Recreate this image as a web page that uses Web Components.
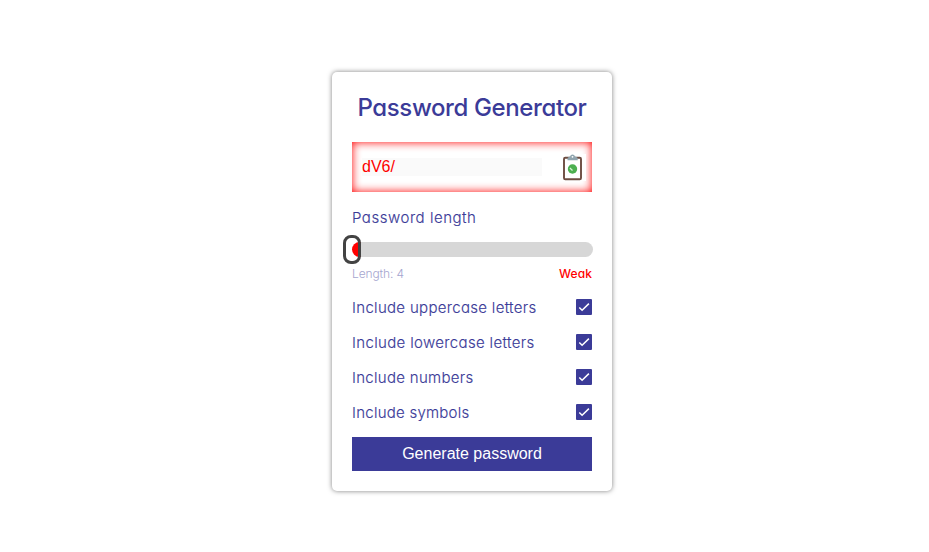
<!DOCTYPE html>
<html lang="en">
<head>
<meta charset="utf-8">
<title>Password Generator</title>
<style>
body{margin:0;background:#fff;font-family:Inter,"Open Sans",sans-serif;color:#3b3b98}
</style>
</head>
<body>
<password-generator></password-generator>
<script>
const define=(name,html,setup)=>customElements.define(name,class extends HTMLElement{
  constructor(){super();this.attachShadow({mode:'open'}).innerHTML=html;}
  connectedCallback(){if(setup)setup(this);}
});

// Text whose letter spacing is adjusted to fill the width given in its attribute.
define('fit-text',`<style>
:host{display:block;white-space:nowrap;font-feature-settings:"cv11" 1,"calt" 0}
span{display:inline-block}
</style><span><slot></slot></span>`,el=>{
  const span=el.shadowRoot.querySelector('span');
  const natural=span.getBoundingClientRect().width;
  const n=el.textContent.length;
  span.style.letterSpacing=((+el.getAttribute('width')-natural)/n)+'px';
});

define('clipboard-icon',`<style>:host{display:block;width:27px;height:27px;background:#fff}svg{display:block}</style>
<svg width="27" height="27" viewBox="0 0 27 27">
<rect x="5" y="3.700" width="17" height="21.500" rx="1.300" fill="#fff" stroke="#6d4c41" stroke-width="1.900"/>
<path d="M8.500 6.300V4.700Q8.500 3.300 10 3.100L11 2.500A2.600 2.600 0 0 1 16 2.500L17.200 3.100Q18.700 3.300 18.700 4.700V6.300z" fill="#90a4ae"/>
<circle cx="13.500" cy="2.800" r=".9" fill="#fff"/>
<circle cx="13.500" cy="15" r="4.700" fill="#4caf50"/>
<path d="M10.900 14.100l2.600 2.300" stroke="#d6f5d7" stroke-width="1.300"/>
</svg>`);

define('password-display',`<style>
:host{display:flex;box-sizing:border-box;height:50px;padding:0 6px 0 10px;align-items:center;justify-content:space-between;box-shadow:inset 0 0 10px #f00}
.value{width:180px;height:18px;font:16px/18px "Liberation Sans",sans-serif;color:#f00;background:#fafafa}
</style><div class="value"><slot></slot></div><clipboard-icon></clipboard-icon>`);

define('length-slider',`<style>
:host{display:block;position:relative;width:241px;height:15px;border-radius:8px;background:linear-gradient(90deg,#f00 9px,#d7d7d7 9px)}
.thumb{position:absolute;box-sizing:border-box;left:-9px;top:-7px;width:18px;height:29px;border:3px solid #434343;border-radius:8px}
</style><div class="thumb"></div>`);

define('check-option',`<style>
:host{display:flex;height:20px;align-items:center;justify-content:space-between;font-size:15px;font-weight:300;-webkit-text-stroke:.15px #3b3b98}
svg{display:block}
</style><slot></slot><svg width="16" height="16" viewBox="0 0 16 16"><rect width="16" height="16" rx="1" fill="#3b3b98"/><path d="M3.300 8.500l2.800 2.700L12.900 4.600" fill="none" stroke="#fff" stroke-width="1.500"/></svg>`);

define('action-button',`<style>
:host{display:block}
button{display:block;width:100%;height:34px;padding:0;border:0;background:#3b3b98;color:#fff;font:16px "Liberation Sans",sans-serif}
</style><button><slot></slot></button>`);

define('password-generator',`<style>
:host{display:flex;box-sizing:border-box;height:552px;padding:72px 0 0 332px;align-items:flex-start}
main{display:flex;flex-direction:column;box-sizing:border-box;width:280px;height:419px;padding:20px;border-radius:5px;background:#fff;box-shadow:0 0 5px rgba(0,0,0,.5)}
h1{display:flex;justify-content:center;margin:0 0 20px;height:30px;font-size:24px;line-height:32px;font-weight:500}
.label{height:20px;margin-top:15px;font-size:15px;line-height:22px;font-weight:300;-webkit-text-stroke:.15px #3b3b98}
length-slider{margin-top:15px}
.status{display:flex;justify-content:space-between;height:16px;margin-top:8px;font-size:12px;line-height:17px}
.length{color:#a5a5cf;font-weight:300;line-height:18px}
.strength{color:#f00;font-weight:500;line-height:17px}
.options{display:flex;flex-direction:column;gap:15px;margin:16px 0 15px}
</style>
<main>
<h1><fit-text width="229">Password Generator</fit-text></h1>
<password-display>dV6/</password-display>
<fit-text class="label" width="124.500">Password length</fit-text>
<length-slider></length-slider>
<div class="status"><fit-text class="length" width="52">Length: 4</fit-text><fit-text class="strength" width="33">Weak</fit-text></div>
<div class="options">
<check-option><fit-text width="184.500">Include uppercase letters</fit-text></check-option>
<check-option><fit-text width="182.500">Include lowercase letters</fit-text></check-option>
<check-option><fit-text width="121.500">Include numbers</fit-text></check-option>
<check-option><fit-text width="117.500">Include symbols</fit-text></check-option>
</div>
<action-button>Generate password</action-button>
</main>`);
</script>
</body>
</html>
